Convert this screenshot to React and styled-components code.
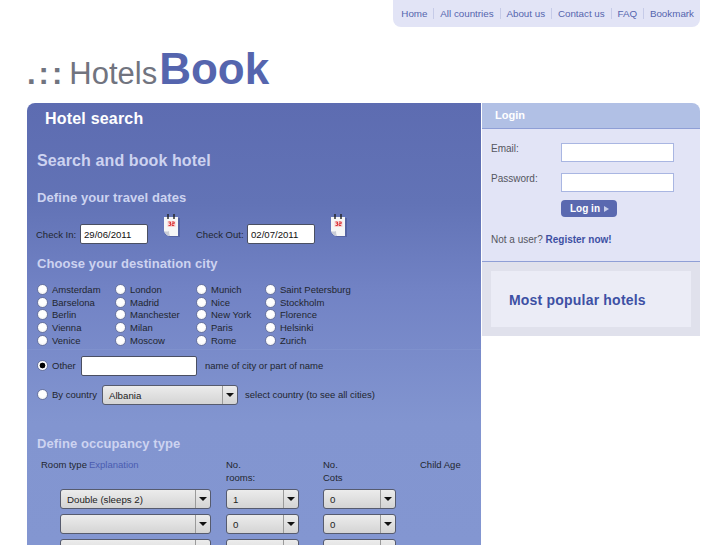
import React from "react";
import styled, { createGlobalStyle } from "styled-components";

const GlobalStyle = createGlobalStyle`
  html, body {
    margin: 0;
    padding: 0;
    background: #fff;
    overflow: hidden;
  }
  body {
    font-family: "Liberation Sans", Arial, sans-serif;
    font-size: 10px;
  }
`;

const Page = styled.div`
  width: 727px;
  height: 545px;
  overflow: hidden;
`;

const Wrapper = styled.div`
  width: 673px;
  margin-left: 27px;
`;

const TopNav = styled.ul`
  list-style: none;
  display: flex;
  align-items: center;
  justify-content: flex-end;
  width: 307px;
  height: 27px;
  box-sizing: border-box;
  margin: 0 0 0 auto;
  padding: 0 6px 0 0;
  background: #e2e4f6;
  border-radius: 0 0 8px 8px;
`;

const NavItem = styled.li`
  color: #5565ae;
  font-size: 9.8px;
  line-height: 11px;
  padding: 0 5.9px;
  white-space: nowrap;
  border-left: 1px solid ${p => (p.$first ? "transparent" : "#c6cbe8")};
  &:last-child {
    padding-right: 0;
  }
`;

const Logo = styled.div`
  height: 76px;
  display: flex;
  align-items: baseline;
  white-space: nowrap;
  line-height: 84px;
`;

const LogoDots = styled.span`
  color: #71747f;
  font-size: 31px;
  font-weight: bold;
  letter-spacing: 3px;
  margin-right: 4px;
`;

const LogoLight = styled.span`
  color: #71747f;
  font-size: 31px;
`;

const LogoBold = styled.span`
  color: #5565ae;
  font-size: 44px;
  font-weight: bold;
  margin-left: 2px;
`;

const Columns = styled.div`
  display: flex;
  align-items: flex-start;
  gap: 1px;
`;

const SearchPanel = styled.div`
  width: 454px;
  height: 442px;
  overflow: hidden;
  border-radius: 8px 0 0 0;
  background: linear-gradient(#5d6cb1 0, #6273b6 100px, #7283c5 190px, #8295d0 320px, #8396d1 100%);
`;

const PanelTitle = styled.h1`
  margin: 0;
  padding: 1px 0 0 18px;
  height: 29px;
  line-height: 30px;
  font-size: 16px;
  font-weight: bold;
  letter-spacing: 0.2px;
  color: #fff;
`;

const Heading = styled.h2`
  margin: 0;
  padding-left: 10px;
  color: #cdd3f0;
  font-size: 16px;
  line-height: 18px;
  font-weight: bold;
  letter-spacing: 0.1px;
  padding-top: 19px;
`;

const SubHeading = styled.h3`
  margin: 0;
  padding-left: 10px;
  color: #cdd3f0;
  font-size: 13px;
  line-height: 16px;
  font-weight: bold;
  letter-spacing: 0.08px;
  padding-top: ${p => p.$top}px;
`;

const DateRow = styled.div`
  display: flex;
  align-items: center;
  height: 26px;
  margin-top: 15px;
  padding-left: 9px;
  color: #22262f;
`;

const DateLabel = styled.label`
  font-size: 9.5px;
  margin-right: 2px;
  width: ${p => p.$w}px;
`;

const TextBox = styled.input`
  box-sizing: border-box;
  width: ${p => p.$w}px;
  height: ${p => p.$h}px;
  padding: 0 3px;
  border: 1px solid #4a4f62;
  border-radius: 2px;
  background: #fff;
  color: #111;
  font: 9.6px "Liberation Sans", sans-serif;
  outline: none;
`;

const CalendarSlot = styled.span`
  display: flex;
  width: 48px;
  height: 26px;
  padding-left: 14px;
  box-sizing: border-box;
  transform: translateY(-7px);
`;

const CityGrid = styled.div`
  display: grid;
  grid-template-columns: 78px 81px 69px 1fr;
  grid-auto-flow: column;
  grid-template-rows: repeat(5, 12.8px);
  margin-top: 11px;
  padding: 0 0 2px 10px;
  border-bottom: 1px solid #7f91cd;
`;

const City = styled.label`
  display: flex;
  align-items: center;
  gap: 4px;
  color: #22262f;
  font-size: 9.5px;
  white-space: nowrap;
`;

const Radio = styled.input.attrs({ type: "radio" })`
  appearance: none;
  flex: none;
  box-sizing: border-box;
  width: 11px;
  height: 11px;
  margin: 0;
  border: 1px solid #6b76a0;
  border-radius: 50%;
  background: radial-gradient(circle at 50% 40%, #fff 45%, #e8e8e8 100%);
  &:checked {
    background: radial-gradient(circle, #000 0 2.6px, #fff 3.2px);
  }
`;

const ChoiceRow = styled.div`
  display: flex;
  align-items: center;
  height: 20px;
  margin-top: ${p => p.$top}px;
  padding-left: 10px;
  color: #22262f;
  font-size: 9.5px;
  white-space: nowrap;
`;

const ChoiceLabel = styled.label`
  display: flex;
  align-items: center;
  gap: 4px;
  width: ${p => p.$w}px;
`;

const Hint = styled.span`
  margin-left: ${p => p.$left}px;
`;

const SelectBox = styled.div`
  display: flex;
  box-sizing: border-box;
  flex: none;
  width: ${p => p.$w}px;
  height: 20px;
  border: 1px solid #565b6e;
  border-radius: 3px;
  background: linear-gradient(#ececec, #d4d4d4);
  color: #222;
  font-size: 9.7px;
  line-height: 20px;
`;

const SelectValue = styled.span`
  flex: 1;
  padding-left: 6px;
`;

const SelectArrow = styled.span`
  flex: none;
  display: flex;
  align-items: center;
  justify-content: center;
  width: 14px;
  border-left: 1px solid #9a9a9a;
  &::after {
    content: "";
    border-left: 4px solid transparent;
    border-right: 4px solid transparent;
    border-top: 4px solid #111;
  }
`;

const OccupancyHead = styled.div`
  display: grid;
  grid-template-columns: 185px 97px 97px 1fr;
  margin-top: 6px;
  padding-left: 14px;
  color: #22262f;
  font-size: 9.5px;
  line-height: 13px;
`;

const Explain = styled.a`
  color: #4a5cb0;
  margin-left: 2px;
`;

const OccupancyRow = styled.div`
  display: grid;
  grid-template-columns: 166px 97px 97px;
  margin: 5px 0 0 33px;
`;

const Sidebar = styled.aside`
  width: 218px;
`;

const LoginHead = styled.div`
  height: 25px;
  line-height: 24px;
  padding-left: 13px;
  background: #b1c0e5;
  border-bottom: 1px solid #8f9fd6;
  border-radius: 0 8px 0 0;
  color: #fff;
  font-size: 11px;
  font-weight: bold;
`;

const LoginBody = styled.div`
  height: 133px;
  box-sizing: border-box;
  padding: 14px 0 0 9px;
  background: #e2e4f6;
  border-bottom: 1px solid #8f9fd6;
  color: #55565f;
  font-size: 10px;
`;

const LoginRow = styled.div`
  display: flex;
  align-items: flex-start;
  height: ${p => p.$h}px;
`;

const LoginLabel = styled.label`
  width: 70px;
  line-height: 13px;
  margin-top: -1px;
`;

const LoginInput = styled.input`
  box-sizing: border-box;
  width: 113px;
  height: 19px;
  border: 1px solid #a9b6e2;
  background: #fff;
  outline: none;
`;

const LoginButton = styled.button`
  display: flex;
  align-items: center;
  gap: 4px;
  height: 17px;
  width: 56px;
  margin-left: 70px;
  padding: 0 0 0 9px;
  border: 0;
  border-radius: 4px;
  background: #5a69b0;
  color: #fff;
  font: bold 10px "Liberation Sans", sans-serif;
  &::after {
    content: "";
    border-left: 5px solid #c8cfeb;
    border-top: 3.5px solid transparent;
    border-bottom: 3.5px solid transparent;
  }
`;

const LoginNote = styled.p`
  margin: 16px 0 0;
  line-height: 13px;
`;

const RegisterLink = styled.a`
  color: #3d50a4;
  font-weight: bold;
`;

const PopularWrap = styled.div`
  height: 74px;
  box-sizing: border-box;
  padding: 9px;
  background: #e0e1ec;
`;

const PopularBox = styled.div`
  height: 56px;
  line-height: 58px;
  padding-left: 18px;
  background: #ebecf6;
  color: #3d50a4;
  font-size: 14px;
  font-weight: bold;
  letter-spacing: 0.2px;
`;

const CalendarIcon = () => (
  <svg width="20" height="26" viewBox="0 0 20 26">
    <path d="M3 4h15v19H8l-5-3z" fill="#39447c" opacity=".4" />
    <path d="M2 3h14v19H8q-4 0-6-5z" fill="#f6f6f6" />
    <path d="M2 17q3 1 5 0 0 3 1 5-4 0-6-5z" fill="#c9ccd6" />
    <path d="M6 0v5M12 0v5" stroke="#222" strokeWidth="1.4" />
    <rect x="5.5" y="7" width="8" height="6" fill="#f7d3d3" />
    <path d="M6.5 8h2v1.5H7.4M8.5 9.5v2h-2M10 8h2.2v1.7H10v1.8h2.2" fill="none" stroke="#d8262a" strokeWidth=".9" />
  </svg>
);

const Select = ({ w, value }) => (
  <SelectBox $w={w}>
    <SelectValue>{value}</SelectValue>
    <SelectArrow />
  </SelectBox>
);

const cities = [
  "Amsterdam", "Barselona", "Berlin", "Vienna", "Venice",
  "London", "Madrid", "Manchester", "Milan", "Moscow",
  "Munich", "Nice", "New York", "Paris", "Rome",
  "Saint Petersburg", "Stockholm", "Florence", "Helsinki", "Zurich",
];

const navLinks = ["Home", "All countries", "About us", "Contact us", "FAQ", "Bookmark"];

const rooms = [
  { type: "Double (sleeps 2)", count: "1", cots: "0" },
  { type: "", count: "0", cots: "0" },
  { type: "", count: "0", cots: "0" },
];

const App = () => (
  <Page>
    <GlobalStyle />
    <Wrapper>
      <TopNav>
        {navLinks.map((link, i) => (
          <NavItem key={link} $first={i === 0}>{link}</NavItem>
        ))}
      </TopNav>
      <Logo>
        <LogoDots>.::</LogoDots>
        <LogoLight>Hotels</LogoLight>
        <LogoBold>Book</LogoBold>
      </Logo>
      <Columns>
        <SearchPanel>
          <PanelTitle>Hotel search</PanelTitle>
          <Heading>Search and book hotel</Heading>
          <SubHeading $top={20}>Define your travel dates</SubHeading>
          <DateRow>
            <DateLabel $w={42}>Check In:</DateLabel>
            <TextBox $w={68} $h={20} defaultValue="29/06/2011" />
            <CalendarSlot><CalendarIcon /></CalendarSlot>
            <DateLabel $w={49}>Check Out:</DateLabel>
            <TextBox $w={68} $h={20} defaultValue="02/07/2011" />
            <CalendarSlot><CalendarIcon /></CalendarSlot>
          </DateRow>
          <SubHeading $top={9}>Choose your destination city</SubHeading>
          <CityGrid>
            {cities.map(city => (
              <City key={city}><Radio name="city" />{city}</City>
            ))}
          </CityGrid>
          <ChoiceRow $top={6}>
            <ChoiceLabel $w={44}><Radio name="city" defaultChecked />Other</ChoiceLabel>
            <TextBox $w={116} $h={20} />
            <Hint $left={8}>name of city or part of name</Hint>
          </ChoiceRow>
          <ChoiceRow $top={9}>
            <ChoiceLabel $w={65}><Radio name="city" />By country</ChoiceLabel>
            <Select w={136} value="Albania" />
            <Hint $left={7}>select country (to see all cities)</Hint>
          </ChoiceRow>
          <SubHeading $top={31}>Define occupancy type</SubHeading>
          <OccupancyHead>
            <span>Room type<Explain>Explanation</Explain></span>
            <span>No.<br />rooms:</span>
            <span>No.<br />Cots</span>
            <span>Child Age</span>
          </OccupancyHead>
          {rooms.map((room, i) => (
            <OccupancyRow key={i}>
              <Select w={151} value={room.type} />
              <Select w={73} value={room.count} />
              <Select w={73} value={room.cots} />
            </OccupancyRow>
          ))}
        </SearchPanel>
        <Sidebar>
          <LoginHead>Login</LoginHead>
          <LoginBody>
            <LoginRow $h={30}>
              <LoginLabel>Email:</LoginLabel>
              <LoginInput />
            </LoginRow>
            <LoginRow $h={27}>
              <LoginLabel>Password:</LoginLabel>
              <LoginInput />
            </LoginRow>
            <LoginButton>Log in</LoginButton>
            <LoginNote>Not a user? <RegisterLink>Register now!</RegisterLink></LoginNote>
          </LoginBody>
          <PopularWrap>
            <PopularBox>Most popular hotels</PopularBox>
          </PopularWrap>
        </Sidebar>
      </Columns>
    </Wrapper>
  </Page>
);

export default App;
